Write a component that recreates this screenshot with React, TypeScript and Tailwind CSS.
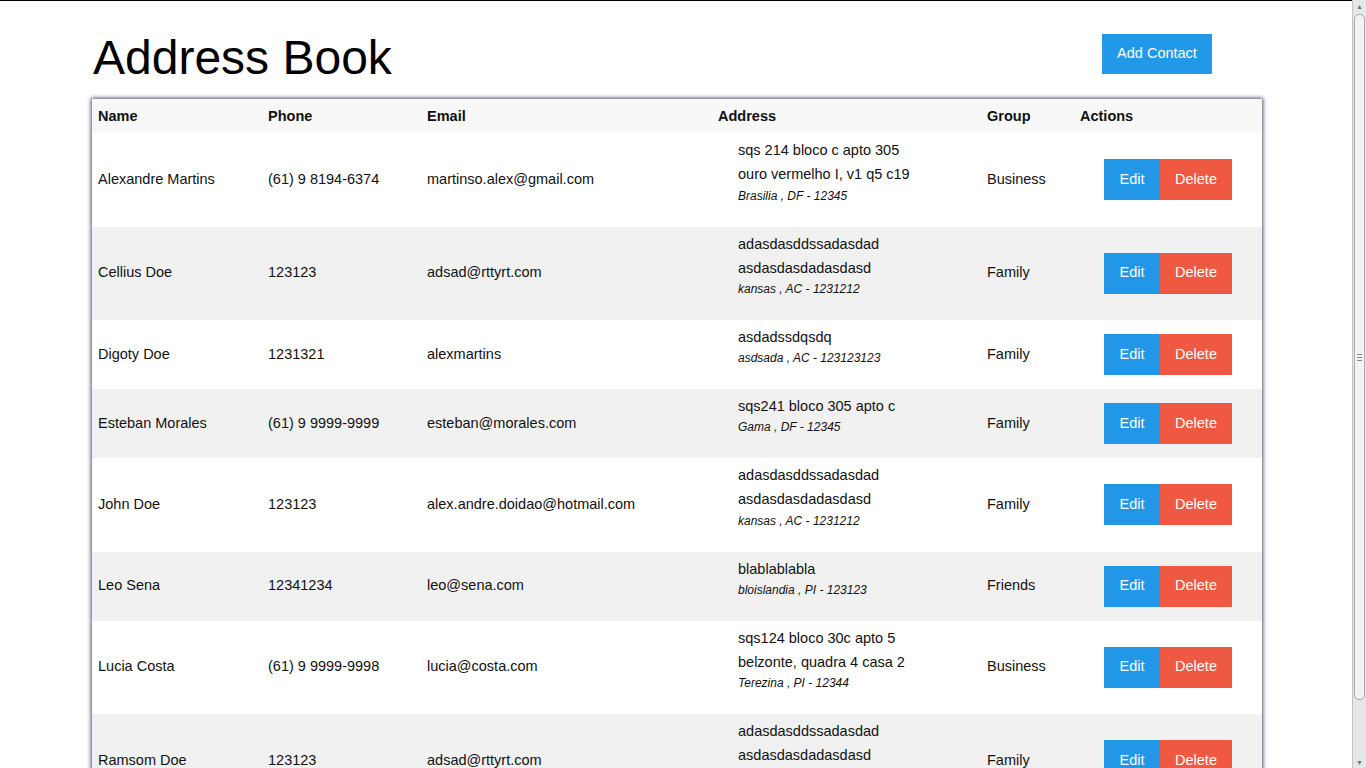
import React from 'react'

type Contact = {
  name: string
  phone: string
  email: string
  lines: string[]
  city: string
  group: string
}

const contacts: Contact[] = [
  { name: 'Alexandre Martins', phone: '(61) 9 8194-6374', email: 'martinso.alex@gmail.com', lines: ['sqs 214 bloco c apto 305', 'ouro vermelho I, v1 q5 c19'], city: 'Brasilia , DF - 12345', group: 'Business' },
  { name: 'Cellius Doe', phone: '123123', email: 'adsad@rttyrt.com', lines: ['adasdasddssadasdad', 'asdasdasdadasdasd'], city: 'kansas , AC - 1231212', group: 'Family' },
  { name: 'Digoty Doe', phone: '1231321', email: 'alexmartins', lines: ['asdadssdqsdq'], city: 'asdsada , AC - 123123123', group: 'Family' },
  { name: 'Esteban Morales', phone: '(61) 9 9999-9999', email: 'esteban@morales.com', lines: ['sqs241 bloco 305 apto c'], city: 'Gama , DF - 12345', group: 'Family' },
  { name: 'John Doe', phone: '123123', email: 'alex.andre.doidao@hotmail.com', lines: ['adasdasddssadasdad', 'asdasdasdadasdasd'], city: 'kansas , AC - 1231212', group: 'Family' },
  { name: 'Leo Sena', phone: '12341234', email: 'leo@sena.com', lines: ['blablablabla'], city: 'bloislandia , PI - 123123', group: 'Friends' },
  { name: 'Lucia Costa', phone: '(61) 9 9999-9998', email: 'lucia@costa.com', lines: ['sqs124 bloco 30c apto 5', 'belzonte, quadra 4 casa 2'], city: 'Terezina , PI - 12344', group: 'Business' },
  { name: 'Ramsom Doe', phone: '123123', email: 'adsad@rttyrt.com', lines: ['adasdasddssadasdad', 'asdasdasdadasdasd'], city: 'kansas , AC - 1231212', group: 'Family' },
]

const cols = ['Name', 'Phone', 'Email', 'Address', 'Group', 'Actions']
const widths = ['w-[170px]', 'w-[159px]', 'w-[291px]', 'w-[269px]', 'w-[93px]', 'w-[188px]']

function Scrollbar() {
  return (
    <div className="w-[14px] h-full bg-[#e6e6e6] border-l border-[#c4c4c4] flex flex-col items-center">
      <div className="h-[12px] w-full flex items-center justify-center text-[7px] leading-none text-[#777]">▲</div>
      <div className="mt-[2px] h-[686px] w-[11px] rounded-[5px] border border-[#a9a9a9] bg-[#f3f3f3] flex items-center justify-center">
        <div className="flex flex-col gap-[2px]">
          <div className="h-px w-[5px] bg-[#888]" />
          <div className="h-px w-[5px] bg-[#888]" />
          <div className="h-px w-[5px] bg-[#888]" />
        </div>
      </div>
      <div className="flex-1" />
      <div className="h-[12px] w-full flex items-center justify-center text-[7px] leading-none text-[#777]">▼</div>
    </div>
  )
}

export default function App() {
  return (
    <div className="h-screen w-full flex overflow-hidden bg-white text-[#111]" style={{ fontFamily: '"Liberation Sans", Arial, sans-serif' }}>
      <div className="flex-1 overflow-hidden border-t border-black">
        <div className="w-[1170px] ml-[92px]">
          <div className="flex items-start justify-between">
            <h1 className="mt-[30px] pl-[1px] text-[48px] leading-[53px] font-normal text-black">Address Book</h1>
            <button className="mt-[33px] mr-[50px] w-[110px] h-[40px] bg-[#2299e8] text-white text-[14.5px]">Add Contact</button>
          </div>

          <div className="mt-[15px] bg-white shadow-[0_0_4px_1px_rgba(45,45,85,0.85)]">
            <table className="w-full table-fixed border-collapse text-[14.5px]">
              <thead>
                <tr className="bg-[#f8f8f8] h-[34px]">
                  {cols.map((c, i) => (
                    <th key={c} className={`${widths[i]} text-left font-bold pl-[6px] pt-[1px] pb-0`}>{c}</th>
                  ))}
                </tr>
              </thead>
              <tbody>
                {contacts.map((c, i) => (
                  <tr key={c.name} className={i % 2 === 0 ? 'bg-white' : 'bg-[#f1f1f1]'}>
                    <td className="pl-[6px] align-middle">{c.name}</td>
                    <td className="pl-[6px] align-middle">{c.phone}</td>
                    <td className="pl-[6px] align-middle">{c.email}</td>
                    <td className="pl-[26px] pt-[5px] pb-[22px] align-top">
                      {c.lines.map((l, j) => (
                        <div key={l} className={j === 0 ? 'leading-[24px]' : 'leading-[24.5px]'}>{l}</div>
                      ))}
                      <div className="italic text-[12px] leading-[18px]">{c.city}</div>
                    </td>
                    <td className="pl-[6px] align-middle">{c.group}</td>
                    <td className="align-middle">
                      <div className="flex justify-center">
                        <button className="w-[56px] h-[41px] bg-[#2297e8] text-white">Edit</button>
                        <button className="w-[72px] h-[41px] bg-[#ef5942] text-white">Delete</button>
                      </div>
                    </td>
                  </tr>
                ))}
              </tbody>
            </table>
          </div>
        </div>
      </div>
      <Scrollbar />
    </div>
  )
}
